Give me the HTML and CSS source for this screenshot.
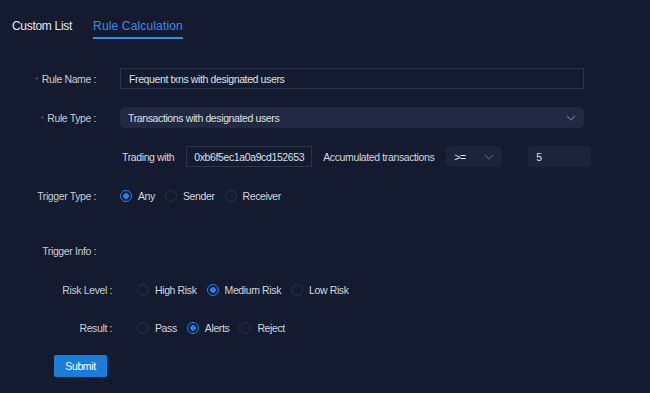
FILE: index.html
```html
<!DOCTYPE html>
<html lang="en">
<head>
  <meta charset="UTF-8" />
  <title>Rule Calculation</title>
  <link rel="stylesheet" href="styles.css">
</head>
<body>

  <nav class="tabs">
    <span class="tab">Custom List</span>
    <span class="tab active">Rule Calculation</span>
  </nav>

  <form class="rule-form">
    <div class="row">
      <label class="label required">Rule Name :</label>
      <input class="field wide" type="text" value="Frequent txns with designated users" />
    </div>

    <div class="row">
      <label class="label required">Rule Type :</label>
      <div class="select wide">
        <span>Transactions with designated users</span>
        <svg class="chevron" width="10" height="6" viewBox="0 0 10 6"><path d="M1 1l4 4 4-4" fill="none" stroke="#6c7388" stroke-width="1.1"/></svg>
      </div>
    </div>

    <div class="row">
      <span class="label"></span>
      <span class="inline-text">Trading with</span>
      <input class="field addr" type="text" value="0xb6f5ec1a0a9cd152653" />
      <span class="inline-text accum">Accumulated transactions</span>
      <div class="select op">
        <span>&gt;=</span>
        <svg class="chevron" width="10" height="6" viewBox="0 0 10 6"><path d="M1 1l4 4 4-4" fill="none" stroke="#4c5468" stroke-width="1.1"/></svg>
      </div>
      <div class="select num"><span>5</span></div>
    </div>

    <div class="row">
      <label class="label">Trigger Type :</label>
      <div class="radios">
        <span class="radio checked">Any</span>
        <span class="radio">Sender</span>
        <span class="radio">Receiver</span>
      </div>
    </div>

    <div class="row info">
      <label class="label">Trigger Info :</label>
    </div>

    <div class="row sub">
      <label class="label">Risk Level :</label>
      <div class="radios">
        <span class="radio">High Risk</span>
        <span class="radio checked">Medium Risk</span>
        <span class="radio">Low Risk</span>
      </div>
    </div>

    <div class="row sub">
      <label class="label">Result :</label>
      <div class="radios">
        <span class="radio">Pass</span>
        <span class="radio checked">Alerts</span>
        <span class="radio">Reject</span>
      </div>
    </div>

    <button type="button" class="submit">Submit</button>
  </form>

</body>
</html>
```

FILE: styles.css
```css
body {
  margin: 0;
  background: #141b2e;
  font-family: "Liberation Sans", Arial, sans-serif;
  font-size: 10.5px;
  letter-spacing: -0.38px;
  color: #d3d6de;
}

.tabs {
  display: flex;
  gap: 21px;
  padding: 16px 0 0 12px;
}

.tab {
  font-size: 12px;
  letter-spacing: -0.3px;
  line-height: 20px;
  padding-bottom: 1px;
  color: #e6e8ee;
  border-bottom: 2px solid transparent;
}

.tab.active {
  letter-spacing: 0.15px;
  color: #3b8be6;
  border-bottom-color: #3b8be6;
}

.rule-form {
  padding-top: 29px;
}

.row {
  display: flex;
  align-items: center;
  height: 21px;
  margin-bottom: 18px;
}

.label {
  width: 96px;
  flex-shrink: 0;
  text-align: right;
  margin-right: 24px;
  color: #c9ccd4;
  white-space: nowrap;
}

.required::before {
  content: "*";
  color: #d6364a;
  font-size: 8px;
  margin-right: 4px;
  vertical-align: 1px;
}

.field {
  box-sizing: border-box;
  height: 21px;
  padding: 0 8px;
  background: transparent;
  border: 1px solid #2c3449;
  color: #dde0e6;
  font: inherit;
  letter-spacing: inherit;
  outline: none;
}

.wide {
  width: 464px;
}

.select {
  box-sizing: border-box;
  display: flex;
  align-items: center;
  justify-content: space-between;
  height: 21px;
  padding: 0 8px;
  background: #212940;
  border-radius: 5px;
  color: #dde0e6;
}

.chevron {
  display: block;
}

.inline-text {
  margin-left: 2px;
  color: #d3d6de;
}

.addr {
  width: 126px;
  margin-left: 12px;
  padding: 0 4px 0 7px;
}

.accum {
  margin-left: 11px;
}

.op {
  width: 56px;
  margin-left: 12px;
  background: #1d2439;
}

.num {
  width: 63px;
  margin-left: 26px;
  background: #1d2439;
  border-radius: 3px;
}

.radios {
  display: flex;
  align-items: center;
  gap: 10px;
}

.radio {
  display: flex;
  align-items: center;
  color: #d3d6de;
}

.radio::before {
  content: "";
  box-sizing: border-box;
  width: 12px;
  height: 12px;
  margin-right: 6px;
  border-radius: 50%;
  border: 1px solid #2a3247;
  background: #151c2f;
}

.radio.checked::before {
  border-color: #1c84f0;
  background: radial-gradient(circle, #1c84f0 0 2.6px, #151c2f 3px);
}

.info {
  margin-top: 34px;
}

.sub .label {
  width: 112px;
  margin-right: 25px;
}

.sub {
  margin-bottom: 17px;
}

.sub + .sub {
  margin-top: 1px;
}

.submit {
  display: block;
  margin: 14px 0 0 54px;
  width: 53px;
  height: 22px;
  padding: 0;
  border: none;
  border-radius: 2px;
  background: #1a7fdc;
  color: #fff;
  font: inherit;
  letter-spacing: inherit;
}
```
